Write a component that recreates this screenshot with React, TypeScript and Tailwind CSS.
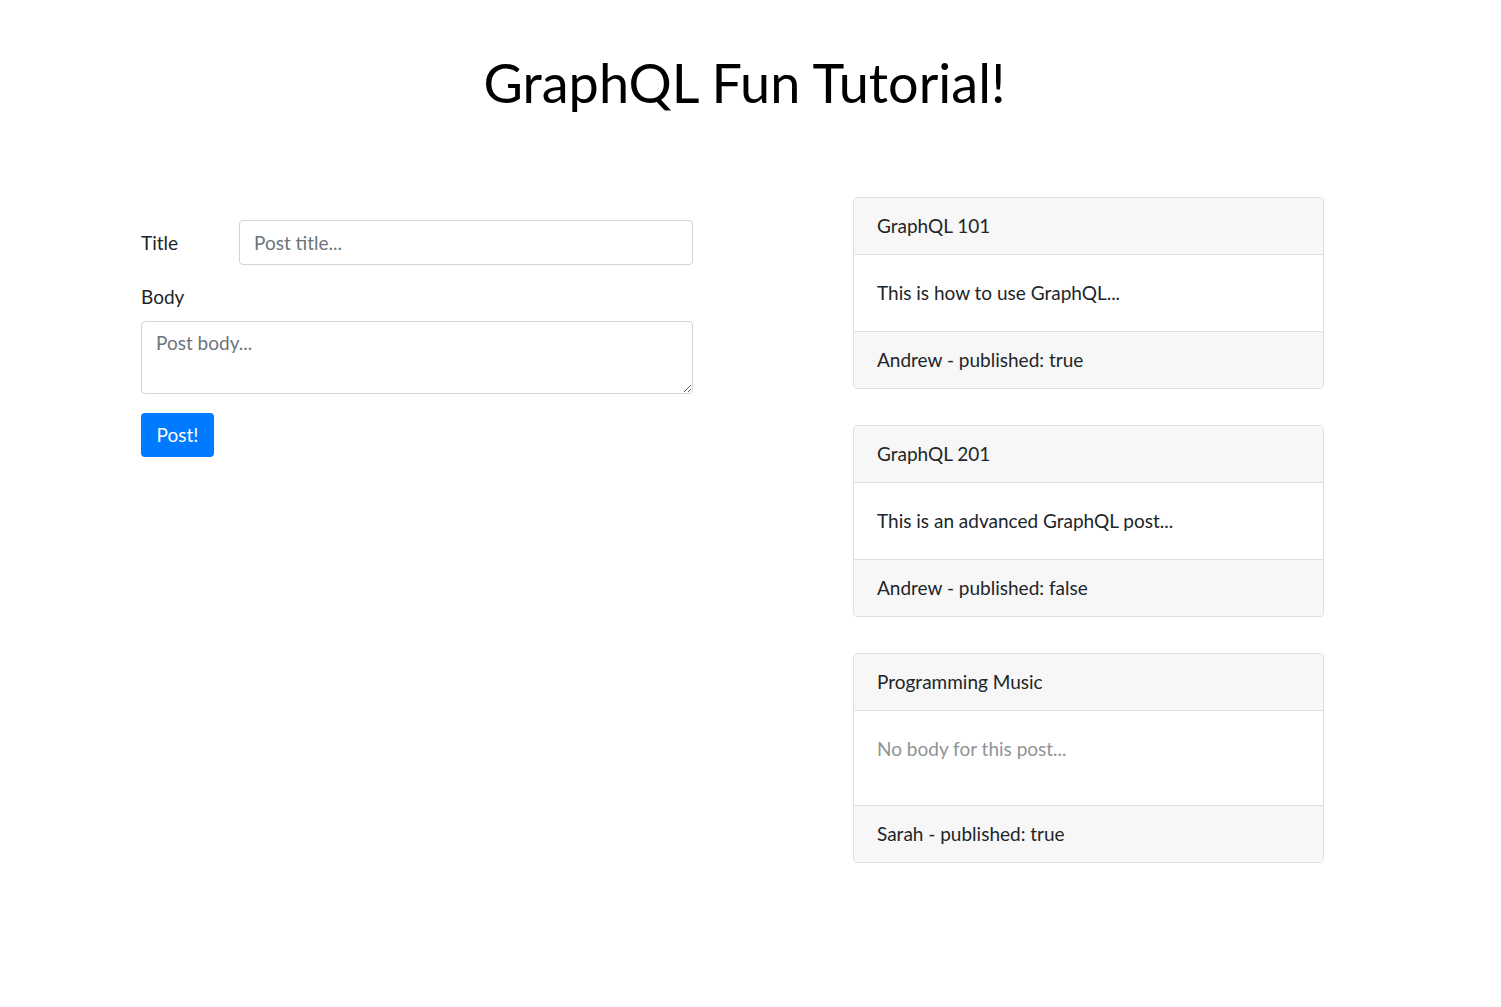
import React from 'react';

type Post = { title: string; body: string | null; author: string; published: boolean };

const posts: Post[] = [
  { title: 'GraphQL 101', body: 'This is how to use GraphQL...', author: 'Andrew', published: true },
  { title: 'GraphQL 201', body: 'This is an advanced GraphQL post...', author: 'Andrew', published: false },
  { title: 'Programming Music', body: null, author: 'Sarah', published: true },
];

const PostCard: React.FC<{ post: Post }> = ({ post }) => (
  <div className="border border-[#dfdfdf] rounded-[4px] overflow-hidden">
    <div className="bg-[#f7f7f7] px-[23px] h-[57px] flex items-center border-b border-[#dfdfdf]">
      {post.title}
    </div>
    {post.body ? (
      <div className="px-[23px] h-[77px] flex items-center border-b border-[#dfdfdf]">{post.body}</div>
    ) : (
      <div className="px-[23px] pt-[24px] h-[95px] border-b border-[#dfdfdf] text-[#8f9398]">No body for this post...</div>
    )}
    <div className="bg-[#f7f7f7] px-[23px] h-[56px] flex items-center">
      {post.author} - published: {String(post.published)}
    </div>
  </div>
);

export default function App() {
  return (
    <div className="min-h-[1007px] bg-white text-[#212529] text-[19px] leading-[28px]" style={{ fontFamily: 'Lato, "Noto Sans", sans-serif' }}>
      <h1 className="text-center pt-[50px] text-[54px] leading-[66px] text-black pr-[12px]" style={{ fontFamily: 'Lato, "Open Sans", sans-serif' }}>
        GraphQL Fun Tutorial!
      </h1>
      <div className="flex pl-[141px] pt-[81px] gap-[160px]">
        <div className="w-[552px] pt-[23px]">
          <div className="flex items-center">
            <label className="w-[98px]">Title</label>
            <input
              placeholder="Post title..."
              className="flex-1 h-[45px] border border-[#ced4da] rounded-[4px] px-[14px] placeholder:text-[#6c757d] outline-none"
            />
          </div>
          <label className="block mt-[18px]">Body</label>
          <textarea
            placeholder="Post body..."
            className="block w-full mt-[10px] h-[73px] border border-[#ced4da] rounded-[4px] px-[14px] py-[7px] placeholder:text-[#6c757d] outline-none"
          />
          <button className="mt-[19px] bg-[#007bff] text-white rounded-[4px] w-[73px] h-[44px]">Post!</button>
        </div>
        <div className="w-[471px] flex flex-col gap-[36px]">
          {posts.map((p) => (
            <PostCard key={p.title} post={p} />
          ))}
        </div>
      </div>
    </div>
  );
}
